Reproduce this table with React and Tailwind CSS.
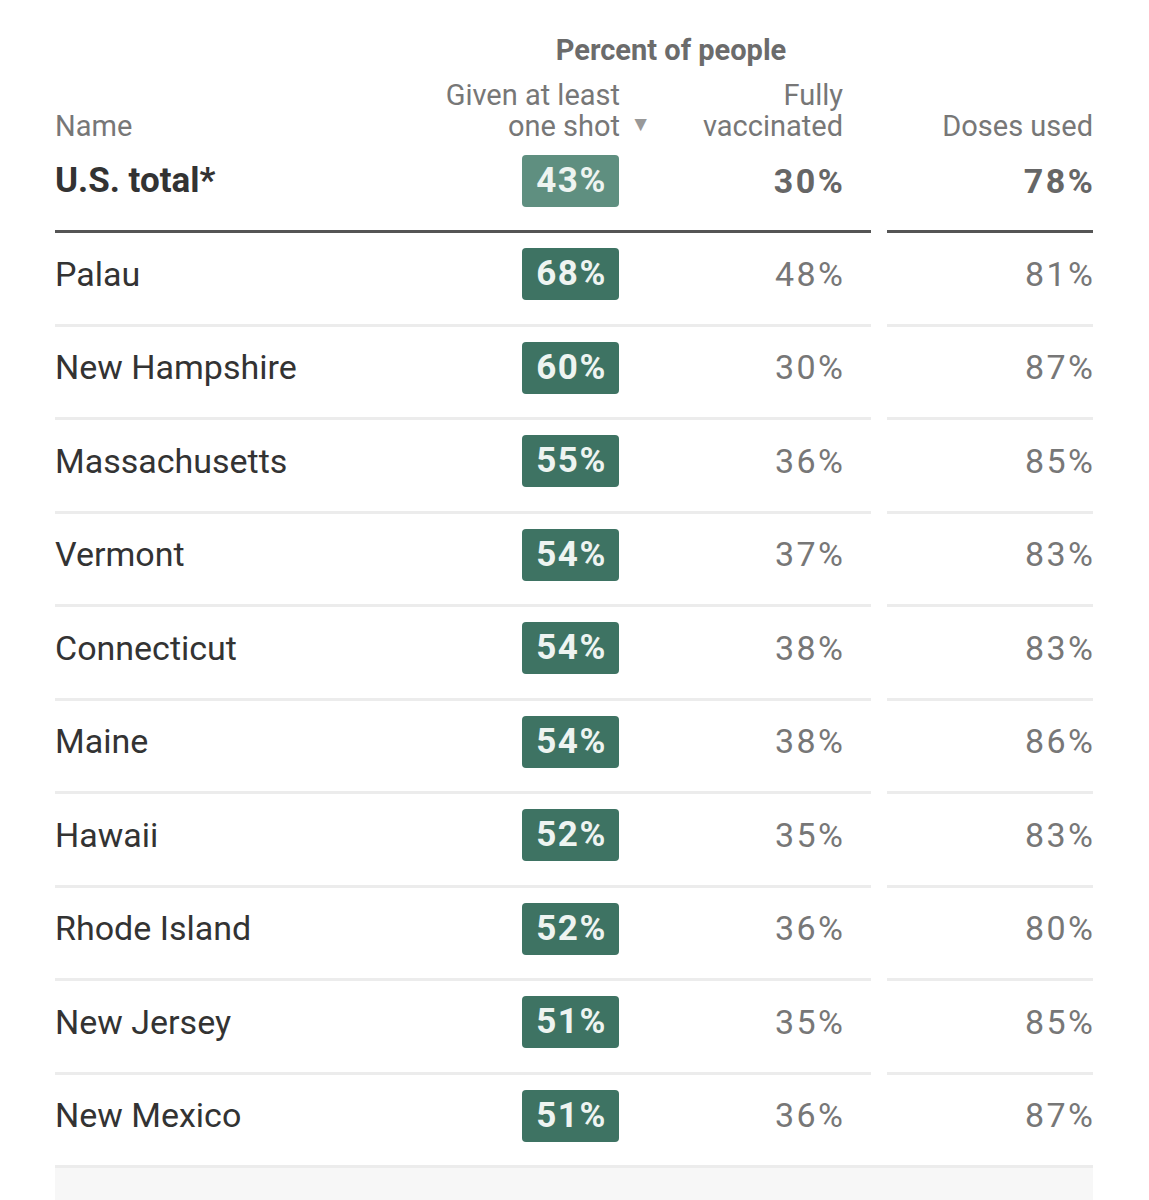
import React from "react";

const rows = [
  { name: "Palau", shot: 68, full: 48, doses: 81 },
  { name: "New Hampshire", shot: 60, full: 30, doses: 87 },
  { name: "Massachusetts", shot: 55, full: 36, doses: 85 },
  { name: "Vermont", shot: 54, full: 37, doses: 83 },
  { name: "Connecticut", shot: 54, full: 38, doses: 83 },
  { name: "Maine", shot: 54, full: 38, doses: 86 },
  { name: "Hawaii", shot: 52, full: 35, doses: 83 },
  { name: "Rhode Island", shot: 52, full: 36, doses: 80 },
  { name: "New Jersey", shot: 51, full: 35, doses: 85 },
  { name: "New Mexico", shot: 51, full: 36, doses: 87 },
];

function Badge({ value, light }) {
  return (
    <span
      className={`w-[97px] h-[52px] rounded-[4px] ${
        light ? "bg-[#5f8f80]" : "bg-[#3e7363]"
      } text-[#eef4f1] font-bold text-[35px] tracking-[1.5px] flex items-center justify-center pl-[2px]`}
    >
      {value}%
    </span>
  );
}

function Row({ name, shot, full, doses, last }) {
  return (
    <div className={`flex ${last ? "border-b-[3px] border-[#ececec]" : ""}`}>
      <div
        className={`flex w-[816px] items-center pr-[28px] pb-[8px] ${
          last ? "h-[90.5px]" : "h-[93.5px] border-b-[3px] border-[#ececec]"
        }`}
      >
        <div className="flex-1 text-[34px] text-[#333]">{name}</div>
        <div className="w-[99px] flex justify-end">
          <Badge value={shot} />
        </div>
        <div className="w-[224px] text-right text-[34px] text-[#777] tracking-[2.5px]">
          <span className="-mr-[2.5px]">{full}%</span>
        </div>
      </div>
      <div className={`w-[16px] ${last ? "h-[90.5px]" : "h-[93.5px]"}`} />
      <div
        className={`w-[206px] flex items-center justify-end pb-[8px] text-[34px] text-[#777] tracking-[2.5px] ${
          last ? "h-[90.5px]" : "h-[93.5px] border-b-[3px] border-[#ececec]"
        }`}
      >
        <span className="-mr-[2.5px]">{doses}%</span>
      </div>
    </div>
  );
}

export default function App() {
  return (
    <div
      className="bg-white min-h-[1200px] pl-[55px] pt-[33px]"
      style={{ fontFamily: "Roboto, 'Liberation Sans', sans-serif" }}
    >
      <div className="w-[1038px]">
        {/* column headers */}
        <div className="flex">
          <div className="w-[816px] pr-[28px]">
            <div className="flex">
              <div className="flex-1" />
              <div className="w-[344px] text-center font-bold text-[29px] leading-[34px] text-[#6b6b6b]">
                Percent of people
              </div>
            </div>
            <div className="flex items-end text-[29px] leading-[31px] text-[#777] mt-[13px]">
              <div className="flex-1">Name</div>
              <div className="w-[300px] text-right relative">
                Given at least
                <br />
                one shot
                <span className="absolute -right-[31px] bottom-[2px] text-[21px] text-[#999]">▼</span>
              </div>
              <div className="w-[223px] text-right">
                Fully
                <br />
                vaccinated
              </div>
            </div>
          </div>
          <div className="ml-[16px] w-[206px] flex items-end justify-end text-[29px] leading-[31px] text-[#777]">
            Doses used
          </div>
        </div>

        {/* US total */}
        <div className="flex">
          <div className="flex w-[816px] h-[91px] items-center pr-[28px] pb-[10px] border-b-[3px] border-[#555]">
            <div className="flex-1 text-[35px] font-bold text-[#333]">U.S. total*</div>
            <div className="w-[99px] flex justify-end">
              <Badge value={43} light />
            </div>
            <div className="w-[224px] text-right text-[34px] font-bold text-[#666] tracking-[2.5px]">
              <span className="-mr-[2.5px]">30%</span>
            </div>
          </div>
          <div className="ml-[16px] w-[206px] h-[91px] flex items-center justify-end pb-[10px] border-b-[3px] border-[#555] text-[34px] font-bold text-[#666] tracking-[2.5px]">
            <span className="-mr-[2.5px]">78%</span>
          </div>
        </div>

        {rows.map((r, i) => (
          <Row key={r.name} {...r} last={i === rows.length - 1} />
        ))}

        <div className="h-[40px] bg-[#f7f7f7]" />
      </div>
    </div>
  );
}
